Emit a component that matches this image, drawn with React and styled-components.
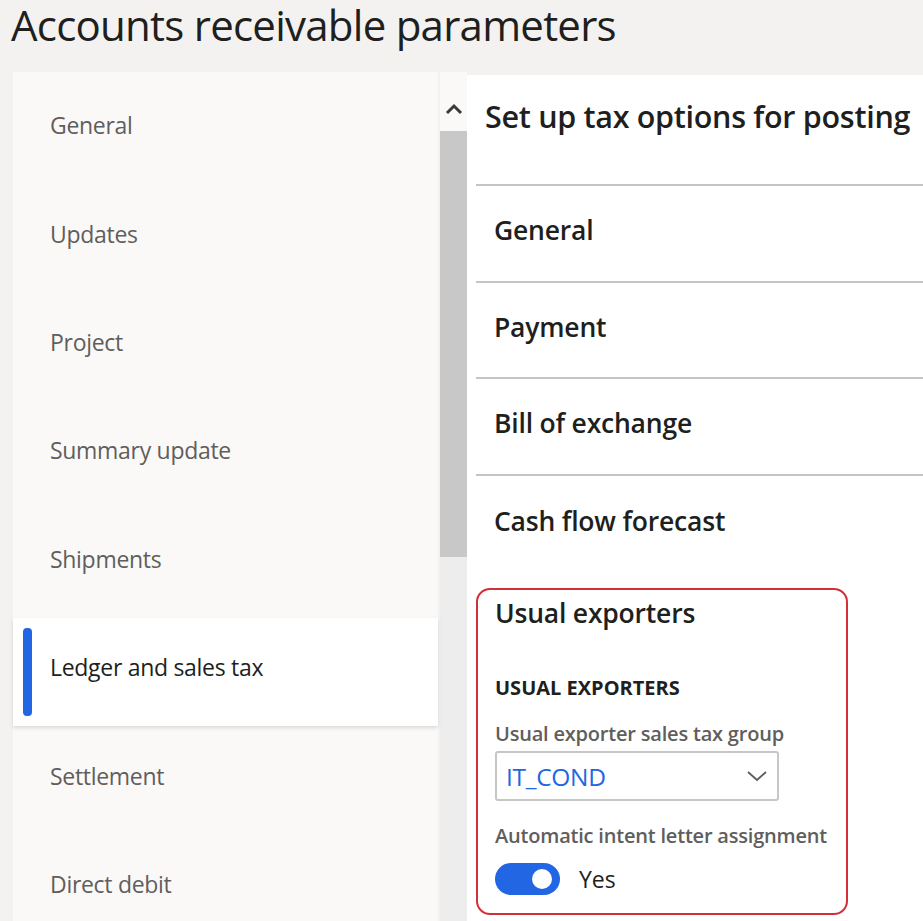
import React, { useState } from 'react';
import styled, { createGlobalStyle } from 'styled-components';

const GlobalStyle = createGlobalStyle`
  html, body {
    margin: 0;
    padding: 0;
    background: #f3f2f1;
    font-family: 'Open Sans', 'Noto Sans', Arial, sans-serif;
    overflow: hidden;
  }
`;

const Page = styled.div`
  width: 923px;
  height: 921px;
  display: flex;
  flex-direction: column;
  background: #f3f2f1;
  overflow: hidden;
`;

const Title = styled.h1`
  margin: 0;
  padding: 0 0 0 11px;
  height: 72px;
  box-sizing: border-box;
  font-size: 42px;
  font-weight: 400;
  letter-spacing: -0.75px;
  color: #201f1e;
  line-height: 50px;
  white-space: nowrap;
`;

const Body = styled.div`
  flex: 1;
  display: flex;
  padding-left: 13px;
  min-height: 0;
`;

const Nav = styled.nav`
  width: 425px;
  background: #faf9f8;
  display: flex;
  flex-direction: column;
  padding-top: 4px;
`;

const NavItem = styled.div`
  position: relative;
  height: 108.4px;
  box-sizing: border-box;
  flex-shrink: 0;
  display: flex;
  align-items: center;
  padding: 0 0 10px 37px;
  font-size: 23px;
  letter-spacing: -0.3px;
  color: ${p => (p.$active ? '#201f1e' : '#605e5c')};
  background: ${p => (p.$active ? '#ffffff' : 'transparent')};
  box-shadow: ${p => (p.$active ? '0 2px 4px rgba(0,0,0,0.13)' : 'none')};
  z-index: ${p => (p.$active ? 1 : 0)};
`;

const ActiveBar = styled.span`
  position: absolute;
  left: 10px;
  top: 10px;
  bottom: 10px;
  width: 9px;
  border-radius: 4px;
  background: #2266e3;
`;

const Scroll = styled.div`
  width: 27px;
  margin-left: 2px;
  background: #ededed;
  display: flex;
  flex-direction: column;
`;

const ScrollArrow = styled.div`
  height: 59px;
  box-sizing: border-box;
  padding-top: 30px;
  display: flex;
  justify-content: center;
  background: #faf9f8;
`;

const Thumb = styled.div`
  height: 426px;
  background: #c8c8c8;
`;

const Content = styled.main`
  flex: 1;
  background: #ffffff;
  margin-top: 3px;
  padding-left: 9px;
  display: flex;
  flex-direction: column;
`;

const Heading = styled.h2`
  margin: 0;
  height: 111px;
  box-sizing: border-box;
  padding: 20px 0 0 9px;
  font-size: 30.5px;
  font-weight: 600;
  letter-spacing: -0.3px;
  color: #201f1e;
  white-space: nowrap;
  border-bottom: 2px solid #c4c4c4;
`;

const Section = styled.div`
  height: 96.5px;
  box-sizing: border-box;
  display: flex;
  align-items: center;
  padding: 0 0 6px 18px;
  font-size: 26.5px;
  font-weight: 600;
  letter-spacing: -0.2px;
  color: #201f1e;
  border-bottom: ${p => (p.$last ? 'none' : '2px solid #c4c4c4')};
`;

const Highlight = styled.div`
  margin-top: 16px;
  width: 372px;
  height: 327px;
  box-sizing: border-box;
  border: 2px solid #d32f36;
  border-radius: 14px;
  padding: 5px 0 0 17px;
  display: flex;
  flex-direction: column;
`;

const SectionTitle = styled.div`
  font-size: 26.5px;
  font-weight: 600;
  letter-spacing: -0.2px;
  color: #201f1e;
  line-height: 36px;
`;

const GroupLabel = styled.div`
  margin-top: 44px;
  font-size: 20px;
  font-weight: 700;
  color: #201f1e;
  line-height: 26px;
`;

const FieldLabel = styled.div`
  margin-top: ${p => p.$gap || 0}px;
  font-size: 20px;
  font-weight: 600;
  color: #605e5c;
  letter-spacing: -0.2px;
  line-height: 28px;
`;

const Select = styled.div`
  margin-top: 3px;
  width: 284px;
  height: 50px;
  box-sizing: border-box;
  border: 2px solid #c8c6c4;
  border-radius: 3px;
  display: flex;
  align-items: center;
  justify-content: space-between;
  padding: 0 9px 0 9px;
  font-size: 24.5px;
  color: #2266e3;
  letter-spacing: -0.3px;
`;

const ToggleRow = styled.div`
  margin-top: 13px;
  height: 32px;
  display: flex;
  align-items: center;
  gap: 19px;
  font-size: 23px;
  color: #201f1e;
`;

const Track = styled.button`
  width: 65px;
  height: 32px;
  border: none;
  border-radius: 16px;
  padding: 0;
  background: ${p => (p.$on ? '#2266e3' : '#c8c6c4')};
  display: flex;
  align-items: center;
  justify-content: ${p => (p.$on ? 'flex-end' : 'flex-start')};
  cursor: pointer;
`;

const Knob = styled.span`
  width: 20px;
  height: 20px;
  border-radius: 50%;
  background: #ffffff;
  margin: 0 8px;
`;

const navItems = [
  'General',
  'Updates',
  'Project',
  'Summary update',
  'Shipments',
  'Ledger and sales tax',
  'Settlement',
  'Direct debit',
];

const sections = ['General', 'Payment', 'Bill of exchange', 'Cash flow forecast'];

export default function App() {
  const [on, setOn] = useState(true);
  return (
    <Page>
      <GlobalStyle />
      <Title>Accounts receivable parameters</Title>
      <Body>
        <Nav>
          {navItems.map(item => (
            <NavItem key={item} $active={item === 'Ledger and sales tax'}>
              {item === 'Ledger and sales tax' && <ActiveBar />}
              {item}
            </NavItem>
          ))}
        </Nav>
        <Scroll>
          <ScrollArrow>
            <svg width="20" height="14" viewBox="0 0 20 14">
              <path d="M3 11 L10 4 L17 11" fill="none" stroke="#3b3a39" strokeWidth="3" />
            </svg>
          </ScrollArrow>
          <Thumb />
        </Scroll>
        <Content>
          <Heading>Set up tax options for posting</Heading>
          {sections.map((s, i) => (
            <Section key={s} $last={i === sections.length - 1}>
              {s}
            </Section>
          ))}
          <Highlight>
            <SectionTitle>Usual exporters</SectionTitle>
            <GroupLabel>USUAL EXPORTERS</GroupLabel>
            <FieldLabel $gap={19}>Usual exporter sales tax group</FieldLabel>
            <Select>
              <span>IT_COND</span>
              <svg width="22" height="14" viewBox="0 0 22 14">
                <path d="M2 3 L11 11 L20 3" fill="none" stroke="#605e5c" strokeWidth="1.8" />
              </svg>
            </Select>
            <FieldLabel $gap={21}>Automatic intent letter assignment</FieldLabel>
            <ToggleRow>
              <Track $on={on} onClick={() => setOn(!on)}>
                <Knob />
              </Track>
              {on ? 'Yes' : 'No'}
            </ToggleRow>
          </Highlight>
        </Content>
      </Body>
    </Page>
  );
}
